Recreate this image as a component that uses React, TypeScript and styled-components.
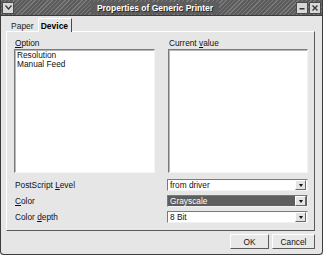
import React from 'react'
import styled, { createGlobalStyle } from 'styled-components'

const Global = createGlobalStyle`
  html, body {
    margin: 0;
    padding: 0;
    background: #e6e6e6;
  }
  body {
    font-family: "Liberation Sans", Arial, sans-serif;
    font-size: 8px;
    color: #111;
  }
`

const Window = styled.div`
  width: 323px;
  height: 255px;
  box-sizing: border-box;
  display: flex;
  flex-direction: column;
  background: #e6e6e6;
  border-left: 1px solid #3c3c3c;
  border-right: 1px solid #3c3c3c;
  border-bottom: 1px solid #3c3c3c;
  border-bottom-left-radius: 4px;
  border-bottom-right-radius: 4px;
  overflow: hidden;
`

const TitleBar = styled.div`
  height: 15px;
  flex: none;
  display: flex;
  align-items: center;
  justify-content: space-between;
  padding: 0 1px 0 1px;
  background: repeating-linear-gradient(135deg, #7a7a7a 0 1px, #5c5c5c 1px 3px);
  border-bottom: 1px solid #3a3a3a;
`

const Title = styled.span`
  flex: 1;
  text-align: center;
  font-weight: bold;
  font-size: 8.5px;
  color: #fff;
  text-shadow: 1px 1px 0 #2a2a2a;
  white-space: nowrap;
  & > span {
    background: #5d5d5d;
    padding: 1px 6px;
  }
`

const TitleButton = styled.div`
  width: 10px;
  height: 10px;
  flex: none;
  background: #d8d8d8;
  border: 1px solid #4a4a4a;
  display: flex;
  align-items: center;
  justify-content: center;
  & + & {
    margin-left: 1px;
  }
`

const ButtonGroup = styled.div`
  display: flex;
`

const Body = styled.div`
  flex: 1;
  display: flex;
  flex-direction: column;
  padding: 2px 7px 0 5px;
`

const TabRow = styled.div`
  display: flex;
  height: 13px;
  padding-left: 2px;
  position: relative;
  z-index: 1;
`

const Tab = styled.div<{ $active?: boolean }>`
  display: flex;
  align-items: center;
  padding: 0 3px 0 ${p => (p.$active ? 2 : 2)}px;
  font-size: 8.5px;
  font-weight: ${p => (p.$active ? 'bold' : 'normal')};
  background: #e6e6e6;
  height: ${p => (p.$active ? 14 : 12)}px;
  margin-top: ${p => (p.$active ? 0 : 1)}px;
  box-sizing: border-box;
  border-top: 1px solid ${p => (p.$active ? '#fff' : 'transparent')};
  border-left: 1px solid ${p => (p.$active ? '#fff' : 'transparent')};
  border-right: 1px solid ${p => (p.$active ? '#4a4a4a' : 'transparent')};
  color: ${p => (p.$active ? '#000' : '#222')};
`

const Panel = styled.div`
  height: 200px;
  box-sizing: border-box;
  border-top: 1px solid #fff;
  border-left: 1px solid #fff;
  border-right: 1px solid #5a5a5a;
  border-bottom: 1px solid #5a5a5a;
  padding: 6px 7px 0 7px;
  display: flex;
  flex-direction: column;
`

const Columns = styled.div`
  display: grid;
  grid-template-columns: 141px 140px;
  column-gap: 13px;
`

const Column = styled.div`
  display: flex;
  flex-direction: column;
`

const Label = styled.div`
  height: 11px;
  line-height: 10px;
  font-size: 8.3px;
  white-space: nowrap;
  padding-left: 1px;
`

const ListBox = styled.div`
  height: 124px;
  box-sizing: border-box;
  background: #fff;
  border-top: 1px solid #7a7a7a;
  border-left: 1px solid #7a7a7a;
  border-right: 1px solid #f4f4f4;
  border-bottom: 1px solid #f4f4f4;
  box-shadow: inset 1px 1px 0 #b8b8b8;
  padding: 1px 2px;
`

const ListItem = styled.div`
  line-height: 9px;
  font-size: 8.3px;
  white-space: nowrap;
`

const Form = styled.div`
  margin-top: 6px;
  display: grid;
  grid-template-columns: 153px 141px;
  row-gap: 4px;
  align-items: center;
`

const RowLabel = styled.div`
  font-size: 8.3px;
  padding-left: 1px;
  white-space: nowrap;
`

const Combo = styled.div<{ $focused?: boolean }>`
  height: 12px;
  box-sizing: border-box;
  display: flex;
  align-items: stretch;
  background: ${p => (p.$focused ? '#5e5e5e' : '#fff')};
  color: ${p => (p.$focused ? '#fff' : '#111')};
  border-top: 1px solid #7a7a7a;
  border-left: 1px solid #7a7a7a;
  border-right: 1px solid #f2f2f2;
  border-bottom: 1px solid #f2f2f2;
`

const ComboText = styled.div`
  flex: 1;
  padding-left: 2px;
  line-height: 10px;
  font-size: 8.3px;
  white-space: nowrap;
`

const ComboArrow = styled.div`
  width: 9px;
  margin: 0 1px 0 0;
  background: #e4e4e4;
  border-left: 1px solid #fff;
  border-top: 1px solid #fff;
  border-right: 1px solid #6a6a6a;
  border-bottom: 1px solid #6a6a6a;
  display: flex;
  align-items: center;
  justify-content: center;
  &::after {
    content: '';
    border-left: 2.5px solid transparent;
    border-right: 2.5px solid transparent;
    border-top: 3px solid #111;
  }
`

const ButtonRow = styled.div`
  display: flex;
  justify-content: flex-end;
  gap: 3px;
  padding: 3px 0 0 0;
`

const PushButton = styled.button<{ $w: number }>`
  width: ${p => p.$w}px;
  height: 15px;
  padding: 0;
  font-family: "Liberation Sans", Arial, sans-serif;
  font-size: 8.3px;
  color: #111;
  background: #e8e8e8;
  border-top: 1px solid #fff;
  border-left: 1px solid #fff;
  border-right: 1px solid #5a5a5a;
  border-bottom: 1px solid #5a5a5a;
  box-shadow: 0 0 0 0 transparent;
  border-radius: 1px;
`

const U = styled.span`
  text-decoration: underline;
`

export default function App() {
  return (
    <>
      <Global />
      <Window>
        <TitleBar>
          <TitleButton>
            <svg width="7" height="5" viewBox="0 0 7 5">
              <path d="M0.5 0.5 L3.5 4 L6.5 0.5" fill="none" stroke="#333" strokeWidth="1.2" />
            </svg>
          </TitleButton>
          <Title><span>Properties of Generic Printer</span></Title>
          <ButtonGroup>
            <TitleButton>
              <svg width="6" height="6" viewBox="0 0 6 6">
                <rect x="0.5" y="3" width="5" height="1.5" fill="#333" />
              </svg>
            </TitleButton>
            <TitleButton>
              <svg width="6" height="6" viewBox="0 0 6 6">
                <path d="M0.5 0.5 L5.5 5.5 M5.5 0.5 L0.5 5.5" stroke="#333" strokeWidth="1.3" />
              </svg>
            </TitleButton>
          </ButtonGroup>
        </TitleBar>
        <Body>
          <TabRow>
            <Tab>Paper</Tab>
            <Tab $active>Device</Tab>
          </TabRow>
          <Panel>
            <Columns>
              <Column>
                <Label><U>O</U>ption</Label>
                <ListBox>
                  <ListItem>Resolution</ListItem>
                  <ListItem>Manual Feed</ListItem>
                </ListBox>
              </Column>
              <Column>
                <Label>Current <U>v</U>alue</Label>
                <ListBox />
              </Column>
            </Columns>
            <Form>
              <RowLabel>PostScript <U>L</U>evel</RowLabel>
              <Combo>
                <ComboText>from driver</ComboText>
                <ComboArrow />
              </Combo>
              <RowLabel><U>C</U>olor</RowLabel>
              <Combo $focused>
                <ComboText>Grayscale</ComboText>
                <ComboArrow />
              </Combo>
              <RowLabel>Color <U>d</U>epth</RowLabel>
              <Combo>
                <ComboText>8 Bit</ComboText>
                <ComboArrow />
              </Combo>
            </Form>
          </Panel>
          <ButtonRow>
            <PushButton $w={39}>OK</PushButton>
            <PushButton $w={43}>Cancel</PushButton>
          </ButtonRow>
        </Body>
      </Window>
    </>
  )
}
